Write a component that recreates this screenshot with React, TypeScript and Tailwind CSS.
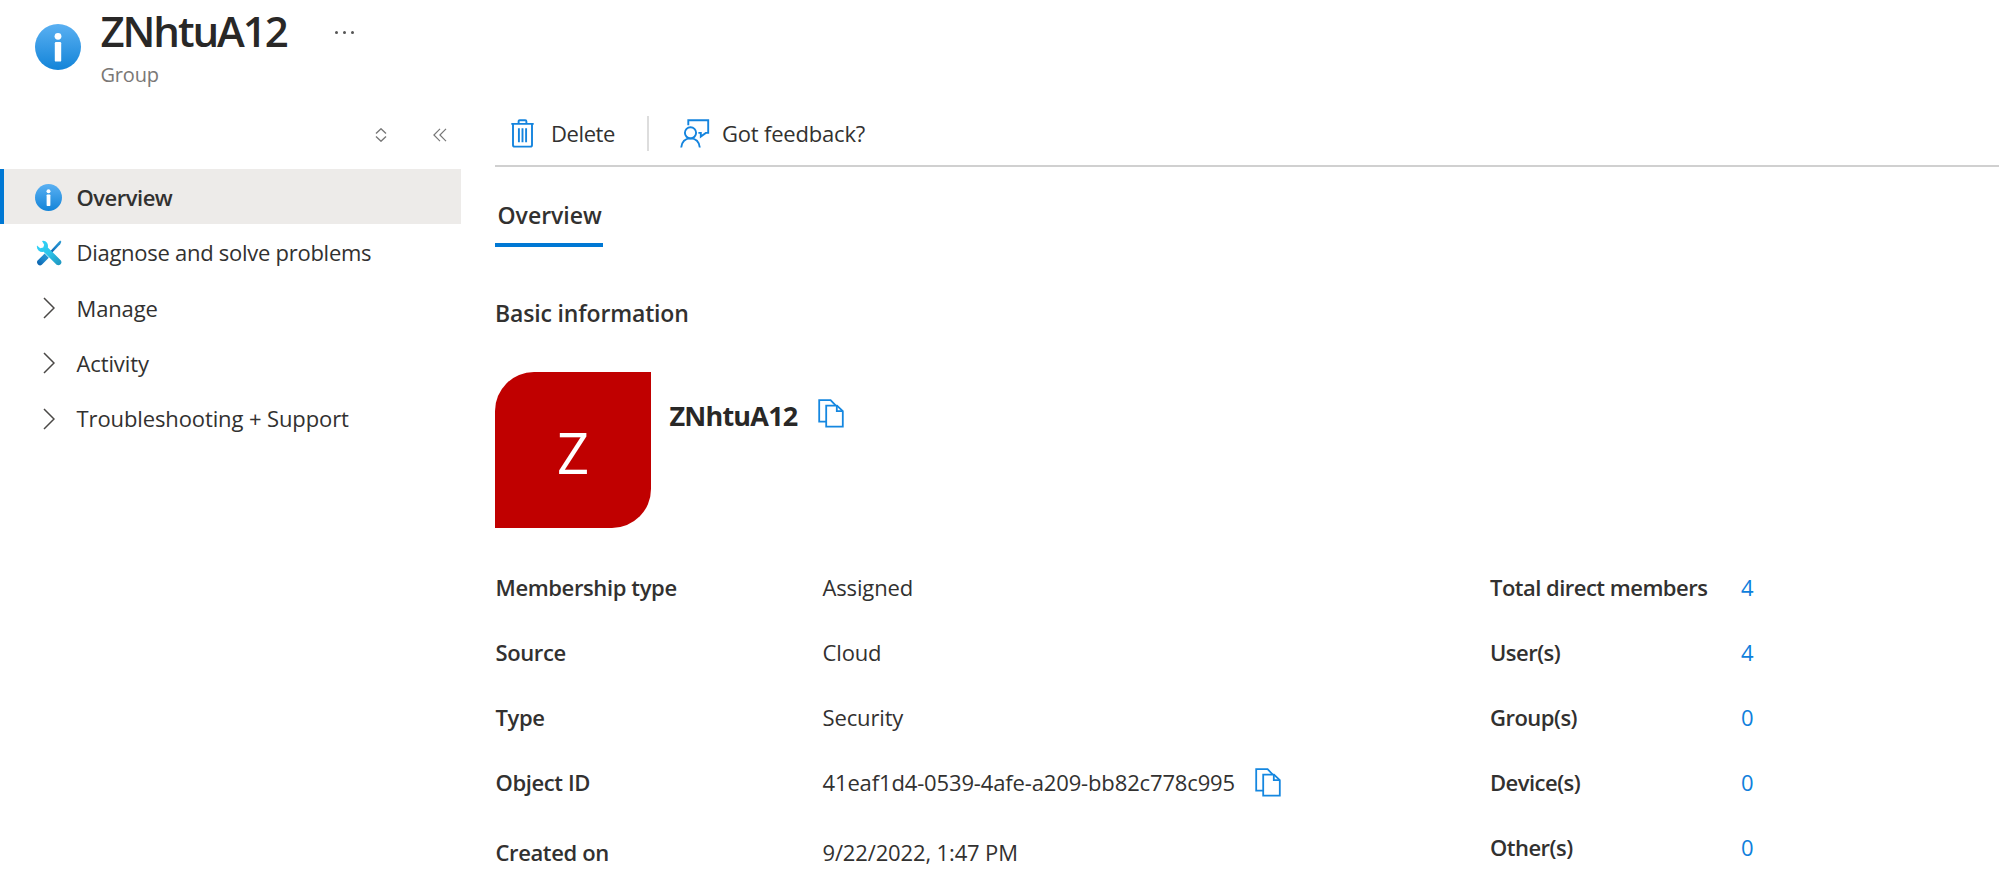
import React from "react";
import clsx from "clsx";

const InfoIcon = ({ className, id }: { className: string; id: string }) => (
  <svg viewBox="0 0 46 46" className={className}>
    <defs>
      <linearGradient id={id} x1="0" y1="0" x2="0" y2="1">
        <stop offset="0" stopColor="#5ab0f2" />
        <stop offset="1" stopColor="#1384d8" />
      </linearGradient>
    </defs>
    <circle cx="23" cy="23" r="23" fill={`url(#${id})`} />
    <circle cx="23" cy="12.3" r="3.4" fill="#fff" />
    <rect x="19.8" y="18" width="6.4" height="19.6" rx="1.2" fill="#fff" />
  </svg>
);

const ToolsIcon = () => (
  <svg viewBox="0 0 26 26" className="h-[26px] w-[26px]">
    <defs>
      <linearGradient id="driver" x1="1" y1="0" x2="0" y2="1">
        <stop offset="0" stopColor="#2f9bd0" />
        <stop offset="0.5" stopColor="#1b86cc" />
        <stop offset="1" stopColor="#0a5ba6" />
      </linearGradient>
      <linearGradient id="wrench" x1="0" y1="0" x2="1" y2="1">
        <stop offset="0" stopColor="#33d6fa" />
        <stop offset="0.5" stopColor="#2cc4ea" />
        <stop offset="1" stopColor="#1e93bd" />
      </linearGradient>
    </defs>
    <path
      d="M24.2 .6 25.4 1.7 24.2 4.2 15.6 13.2 14 11.6 22.2 2.4Z"
      fill="url(#driver)"
    />
    <path
      d="M8.6 13.6 12.8 17.8 5.8 24.8Q3.8 26.2 2 24.4 .2 22.6 1.6 20.6Z"
      fill="url(#driver)"
    />
    <path
      d="M6 .9Q9.2 .3 11 2.7 12.4 4.8 11.8 7.4L24.9 20.4Q26.2 22.6 24.6 24.3 22.8 25.9 20.6 24.8L7.6 11.8Q4.8 12.4 2.5 10.4 .4 8.3 1 5.4L4.2 8.3 7.2 7.5 8.2 4.7Z"
      fill="url(#wrench)"
    />
  </svg>
);

const ChevronIcon = () => (
  <svg
    viewBox="0 0 12 22"
    className="h-[22px] w-[12px]"
    fill="none"
    stroke="#4a4846"
    strokeWidth="1.5"
  >
    <path d="M1 1 11 11 1 21" />
  </svg>
);

const CopyIcon = () => (
  <svg
    viewBox="0 0 26 29"
    className="h-[29px] w-[26px]"
    fill="none"
    stroke="#1587e0"
    strokeWidth="1.8"
  >
    <path d="M8 22.7H1.2V1.2H12.6L17.6 6.4" />
    <path d="M8.2 6.6H19L24.8 12.2V27.6H8.2Z" />
    <path d="M18.8 6.6V12.2H24.8" />
  </svg>
);

const TrashIcon = () => (
  <svg
    viewBox="0 0 24 29"
    className="h-[29px] w-[24px]"
    fill="none"
    stroke="#1484de"
    strokeWidth="1.9"
  >
    <path d="M.3 4.9H22.7M7.6 4.9V2.4Q7.6 1.2 8.8 1.2H14.2Q15.4 1.2 15.4 2.4V4.9" />
    <path d="M2 4.9V25.9Q2 27.6 3.7 27.6H19.3Q21 27.6 21 25.9V4.9" />
    <path d="M7.9 9.3V23.2M11.5 9.3V23.2M15.1 9.3V23.2" />
  </svg>
);

const FeedbackIcon = () => (
  <svg
    viewBox="0 0 30 29"
    className="h-[29px] w-[30px]"
    fill="none"
    stroke="#1484de"
    strokeWidth="1.9"
  >
    <circle cx="10.5" cy="13.8" r="5.6" />
    <path d="M1.2 28.5Q2.2 19.6 10.5 19.4 18.8 19.6 19.8 28.5" />
    <path d="M8.3 6.2V1.2H28.2V13.9H25.8L20.8 17.6V13.9H18.4" />
  </svg>
);

const navItems = [
  { label: "Diagnose and solve problems", icon: <ToolsIcon />, tracking: "tracking-[-0.27px]" },
  { label: "Manage", icon: <ChevronIcon />, tracking: "tracking-[-0.15px]" },
  { label: "Activity", icon: <ChevronIcon />, tracking: "tracking-[-0.12px]" },
  { label: "Troubleshooting + Support", icon: <ChevronIcon />, tracking: "tracking-[-0.11px]" },
];

const details = [
  { label: "Membership type", value: "Assigned" },
  { label: "Source", value: "Cloud" },
  { label: "Type", value: "Security" },
  { label: "Object ID", value: "41eaf1d4-0539-4afe-a209-bb82c778c995", copy: true },
  { label: "Created on", value: "9/22/2022, 1:47 PM", tall: true },
];

const members = [
  { label: "Total direct members", count: 4 },
  { label: "User(s)", count: 4 },
  { label: "Group(s)", count: 0 },
  { label: "Device(s)", count: 0 },
  { label: "Other(s)", count: 0 },
];

const Header = () => (
  <header className="flex h-[108px] pl-[35px]">
    <InfoIcon id="info-lg" className="mt-6 h-[46px] w-[46px]" />
    <div className="ml-[19.5px]">
      <div className="flex items-center">
        <h1 className="mt-[3px] text-[42px] leading-[56px] font-semibold tracking-[-2.1px] text-[#292827]">
          ZNhtuA12
        </h1>
        <div className="ml-[48px] flex gap-[5px] pt-[5px]">
          <span className="h-[3px] w-[3px] rounded-full bg-[#555]" />
          <span className="h-[3px] w-[3px] rounded-full bg-[#555]" />
          <span className="h-[3px] w-[3px] rounded-full bg-[#555]" />
        </div>
      </div>
      <p className="mt-px text-[20px] leading-[29px] tracking-[-0.2px] text-[#7a7876]">Group</p>
    </div>
  </header>
);

const Sidebar = () => (
  <nav className="w-[461px] shrink-0">
    <div className="flex h-[61px] items-center justify-end gap-[46px] pr-[14px] pb-[7px]">
      <svg viewBox="0 0 12 14" className="h-[14px] w-[12px]" fill="none" stroke="#777" strokeWidth="1.4">
        <path d="M1 5.5 6 .8 11 5.5M1 8.5 6 13.2 11 8.5" />
      </svg>
      <svg viewBox="0 0 14 14" className="h-[14px] w-[14px]" fill="none" stroke="#777" strokeWidth="1.2">
        <path d="M7 .8 .9 7 7 13.2M13 .8 6.9 7 13 13.2" />
      </svg>
    </div>
    <div className="flex h-[55px] items-center border-l-4 border-[#0078d4] bg-[#edebe9] pt-[2px] pl-[31px]">
      <InfoIcon id="info-sm" className="h-[27px] w-[27px]" />
      <span className="ml-[14.5px] text-[22px] font-semibold tracking-[-0.5px]">Overview</span>
    </div>
    {navItems.map((item) => (
      <div key={item.label} className="flex h-[55.4px] items-center pt-[2px] pl-[35px]">
        <span className="flex w-[27px] justify-center">{item.icon}</span>
        <span className={clsx("ml-[14.5px] text-[22px]", item.tracking)}>{item.label}</span>
      </div>
    ))}
  </nav>
);

const Toolbar = () => (
  <div className="flex h-[59px] items-center border-b-2 border-[#d0d0d0] pb-[6px] pl-4">
    <TrashIcon />
    <span className="ml-4 text-[22px] tracking-[-0.4px]">Delete</span>
    <span className="ml-8 h-[35px] w-[2px] bg-[#dddddd]" />
    <span className="ml-[31px]">
      <FeedbackIcon />
    </span>
    <span className="ml-3 text-[22px] tracking-[-0.2px]">Got feedback?</span>
  </div>
);

const App = () => (
  <div className="h-[893px] overflow-hidden bg-white font-['Open_Sans','Noto_Sans',sans-serif] text-[#323130]">
    <Header />
    <div className="flex">
      <Sidebar />
      <main className="ml-[34px] flex-1">
        <Toolbar />
        <div className="mt-[27px] w-[108px] border-b-4 border-[#0078d4] pb-[7px] pl-[2.5px] text-[23px] leading-[42px] font-semibold">
          Overview
        </div>
        <h2 className="mt-[49px] text-[23px] leading-[34px] font-semibold tracking-[-0.15px]">
          Basic information
        </h2>
        <div className="mt-[42px] flex">
          <div className="flex h-[156px] w-[156px] items-center justify-center rounded-tl-[39px] rounded-br-[39px] bg-[#c00000] pt-[3px] text-[56px] text-white">
            Z
          </div>
          <span className="mt-[26px] ml-[18.5px] text-[27px] leading-[36px] font-bold tracking-[-0.8px] text-[#292827]">
            ZNhtuA12
          </span>
          <span className="mt-[27px] ml-[21px]">
            <CopyIcon />
          </span>
        </div>
        <div className="mt-[27px] flex text-[22px]">
          <dl className="w-[995px] pl-[0.5px]">
            {details.map((row) => (
              <div
                key={row.label}
                className={clsx("flex items-center", row.tall ? "h-[74px]" : "h-[65px]")}
              >
                <dt className="w-[327px] font-semibold tracking-[-0.38px]">{row.label}</dt>
                <dd className="flex items-center gap-[20px] tracking-[-0.14px]">
                  {row.value}
                  {row.copy && <CopyIcon />}
                </dd>
              </div>
            ))}
          </dl>
          <dl>
            {members.map((row) => (
              <div key={row.label} className="flex h-[65px] items-center">
                <dt className="w-[251px] font-semibold tracking-[-0.52px]">{row.label}</dt>
                <dd className="text-[#0f80dc]">{row.count}</dd>
              </div>
            ))}
          </dl>
        </div>
      </main>
    </div>
  </div>
);

export default App;
